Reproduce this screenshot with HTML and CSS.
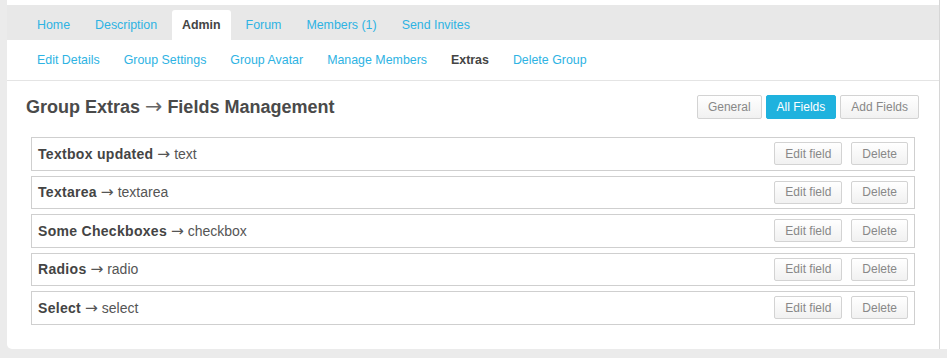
FILE: index.html
```html
<!DOCTYPE html>
<html lang="en">

<head>
    <meta charset="UTF-8">
    <meta name="viewport" content="width=device-width, initial-scale=1.0">
    <title>Group Extras - Fields Management</title>
    <link rel="stylesheet" href="styles.css">
</head>

<body>

    <div class="wrap">
        <div class="panel">
            <ul class="tabs">
                <li><a href="#">Home</a></li>
                <li><a href="#">Description</a></li>
                <li class="active"><a href="#">Admin</a></li>
                <li><a href="#">Forum</a></li>
                <li><a href="#">Members (1)</a></li>
                <li><a href="#">Send Invites</a></li>
            </ul>
            <ul class="subnav">
                <li><a href="#">Edit Details</a></li>
                <li><a href="#">Group Settings</a></li>
                <li><a href="#">Group Avatar</a></li>
                <li><a href="#">Manage Members</a></li>
                <li class="current"><a href="#">Extras</a></li>
                <li><a href="#">Delete Group</a></li>
            </ul>

            <div class="content">
                <div class="content-head">
                    <h2>Group Extras <span class="arrow">&rarr;</span> Fields Management</h2>
                    <div class="btn-group">
                        <button class="btn">General</button>
                        <button class="btn btn-primary">All Fields</button>
                        <button class="btn">Add Fields</button>
                    </div>
                </div>

                <div class="fields">
                    <div class="field-row">
                        <p><strong>Textbox updated</strong> <span class="arrow">&rarr;</span> text</p>
                        <div class="actions"><button class="btn">Edit field</button><button class="btn">Delete</button></div>
                    </div>
                    <div class="field-row">
                        <p><strong>Textarea</strong> <span class="arrow">&rarr;</span> textarea</p>
                        <div class="actions"><button class="btn">Edit field</button><button class="btn">Delete</button></div>
                    </div>
                    <div class="field-row">
                        <p><strong>Some Checkboxes</strong> <span class="arrow">&rarr;</span> checkbox</p>
                        <div class="actions"><button class="btn">Edit field</button><button class="btn">Delete</button></div>
                    </div>
                    <div class="field-row">
                        <p><strong>Radios</strong> <span class="arrow">&rarr;</span> radio</p>
                        <div class="actions"><button class="btn">Edit field</button><button class="btn">Delete</button></div>
                    </div>
                    <div class="field-row">
                        <p><strong>Select</strong> <span class="arrow">&rarr;</span> select</p>
                        <div class="actions"><button class="btn">Edit field</button><button class="btn">Delete</button></div>
                    </div>
                </div>
            </div>
        </div>
    </div>

</body>

</html>
```

FILE: styles.css
```css
body {
    margin: 0;
    background-color: #ebebeb;
    font-family: "Liberation Sans", Arial, sans-serif;
    font-size: 13px;
    color: #555;
}

ul {
    list-style: none;
    margin: 0;
    padding: 0;
}

a {
    text-decoration: none;
    color: #2eb3e3;
}

.wrap {
    margin-left: 7px;
    height: 349px;
    background-color: white;
    border-radius: 0 0 0 5px;
}

.panel {
    width: 933px;
    height: 349px;
    padding-top: 5px;
    box-sizing: border-box;
    border-right: 1px solid #d6d6d6;
}

/* top tabs */
.tabs {
    display: flex;
    align-items: flex-end;
    height: 35px;
    padding-left: 20px;
    background-color: #e8e8e8;
    font-size: 12.4px;
}

.tabs li {
    margin-right: 5px;
}

.tabs a {
    display: block;
    height: 30px;
    line-height: 31px;
    padding: 0 10px;
    border-radius: 3px 3px 0 0;
}

.tabs .active a {
    background-color: white;
    color: #444;
    font-weight: bold;
}

/* admin sub navigation */
.subnav {
    display: flex;
    gap: 24px;
    height: 40px;
    line-height: 40px;
    padding-left: 30px;
    border-bottom: 1px solid #e4e4e4;
    font-size: 12.4px;
}

.subnav .current a {
    color: #444;
    font-weight: bold;
}

.content {
    padding: 14px 20px 0 19px;
}

.content-head {
    display: flex;
    justify-content: space-between;
    align-items: center;
    height: 24px;
}

.content-head h2 {
    margin: 0;
    font-size: 18px;
    color: #4a4a4a;
}

.arrow {
    font-family: "DejaVu Sans", sans-serif;
    font-weight: normal;
    font-size: 1.1em;
    line-height: 1;
}

.content-head .arrow {
    font-size: 1.15em;
    color: #666;
}

.btn-group {
    display: flex;
    gap: 4px;
}

.btn {
    height: 23px;
    padding: 0 10px;
    font-family: inherit;
    font-size: 12px;
    color: #888;
    background: linear-gradient(#ffffff, #f1f1f1);
    border: 1px solid #d3d3d3;
    border-radius: 2px;
}

.btn-group .btn {
    height: 24px;
}

.btn-group .btn-primary {
    background: #1fb2de;
    border-color: #1fb2de;
    color: white;
}

/* field list */
.fields {
    margin: 18px 4px 0 5px;
}

.field-row {
    display: flex;
    justify-content: space-between;
    align-items: center;
    height: 33.5px;
    box-sizing: border-box;
    margin-bottom: 5px;
    padding: 0 6px;
    border: 1px solid #cfcfcf;
}

.field-row p {
    margin: 0;
    font-size: 14px;
    color: #555;
}

.field-row strong {
    color: #444;
    letter-spacing: 0.3px;
}

.actions {
    display: flex;
    gap: 9px;
}
```
